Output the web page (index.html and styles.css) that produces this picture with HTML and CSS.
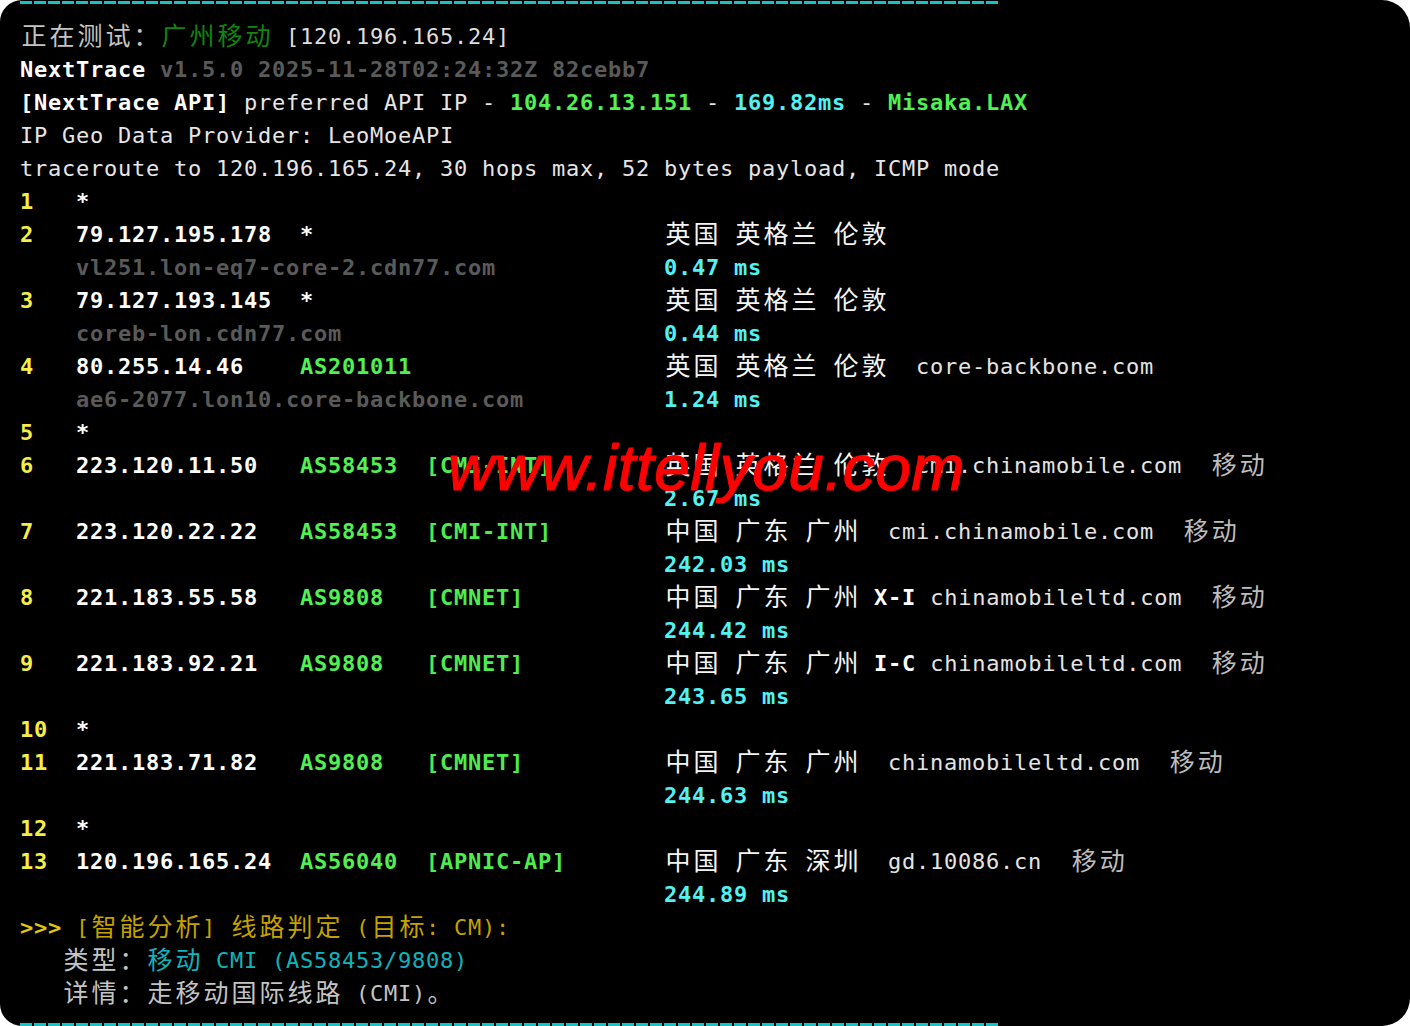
FILE: index.html
```html
<!DOCTYPE html>
<html lang="zh-CN">
<head>
<meta charset="utf-8">
<title>NextTrace</title>
<link rel="stylesheet" href="styles.css">
</head>
<body>
<div class="term">
  <div class="rule"></div>
  <div class="out">
    <div class="ln"><span class="c lg">正在测试：</span><span class="c dg">广州移动</span> <span class="lw">[120.196.165.24]</span></div>
    <div class="ln"><span class="b wh">NextTrace</span><span class="b gy"> v1.5.0 2025-11-28T02:24:32Z 82cebb7</span></div>
    <div class="ln"><span class="b wh">[NextTrace API]</span> preferred API IP - <span class="b gr">104.26.13.151</span> - <span class="b cy">169.82ms</span> - <span class="b gr">Misaka.LAX</span></div>
    <div class="ln">IP Geo Data Provider: LeoMoeAPI</div>
    <div class="ln">traceroute to 120.196.165.24, 30 hops max, 52 bytes payload, ICMP mode</div>

    <div class="hop"><span class="n">1</span><span class="ip">*</span></div>
    <div class="hop"><span class="n">2</span><span class="ip">79.127.195.178</span><span class="ip">*</span><span class="geo"><span class="c">英国</span> <span class="c">英格兰</span> <span class="c">伦敦</span></span></div>
    <div class="hop"><span class="host">vl251.lon-eq7-core-2.cdn77.com</span><span class="lat">0.47 ms</span></div>
    <div class="hop"><span class="n">3</span><span class="ip">79.127.193.145</span><span class="ip">*</span><span class="geo"><span class="c">英国</span> <span class="c">英格兰</span> <span class="c">伦敦</span></span></div>
    <div class="hop"><span class="host">coreb-lon.cdn77.com</span><span class="lat">0.44 ms</span></div>
    <div class="hop"><span class="n">4</span><span class="ip">80.255.14.46</span><span class="as">AS201011</span><span class="geo"><span class="c">英国</span> <span class="c">英格兰</span> <span class="c">伦敦</span>  <span class="dom">core-backbone.com</span></span></div>
    <div class="hop"><span class="host">ae6-2077.lon10.core-backbone.com</span><span class="lat">1.24 ms</span></div>
    <div class="hop"><span class="n">5</span><span class="ip">*</span></div>
    <div class="hop"><span class="n">6</span><span class="ip">223.120.11.50</span><span class="as">AS58453</span><span class="net">[CMI-INT]</span><span class="geo"><span class="c">英国</span> <span class="c">英格兰</span> <span class="c">伦敦</span>  <span class="dom">cmi.chinamobile.com</span>  <span class="c mv">移动</span></span></div>
    <div class="hop"><span class="lat">2.67 ms</span></div>
    <div class="hop"><span class="n">7</span><span class="ip">223.120.22.22</span><span class="as">AS58453</span><span class="net">[CMI-INT]</span><span class="geo"><span class="c">中国</span> <span class="c">广东</span> <span class="c">广州</span>  <span class="dom">cmi.chinamobile.com</span>  <span class="c mv">移动</span></span></div>
    <div class="hop"><span class="lat">242.03 ms</span></div>
    <div class="hop"><span class="n">8</span><span class="ip">221.183.55.58</span><span class="as">AS9808</span><span class="net">[CMNET]</span><span class="geo"><span class="c">中国</span> <span class="c">广东</span> <span class="c">广州</span> <span class="b wh">X-I</span> <span class="dom">chinamobileltd.com</span>  <span class="c mv">移动</span></span></div>
    <div class="hop"><span class="lat">244.42 ms</span></div>
    <div class="hop"><span class="n">9</span><span class="ip">221.183.92.21</span><span class="as">AS9808</span><span class="net">[CMNET]</span><span class="geo"><span class="c">中国</span> <span class="c">广东</span> <span class="c">广州</span> <span class="b wh">I-C</span> <span class="dom">chinamobileltd.com</span>  <span class="c mv">移动</span></span></div>
    <div class="hop"><span class="lat">243.65 ms</span></div>
    <div class="hop"><span class="n">10</span><span class="ip">*</span></div>
    <div class="hop"><span class="n">11</span><span class="ip">221.183.71.82</span><span class="as">AS9808</span><span class="net">[CMNET]</span><span class="geo"><span class="c">中国</span> <span class="c">广东</span> <span class="c">广州</span>  <span class="dom">chinamobileltd.com</span>  <span class="c mv">移动</span></span></div>
    <div class="hop"><span class="lat">244.63 ms</span></div>
    <div class="hop"><span class="n">12</span><span class="ip">*</span></div>
    <div class="hop"><span class="n">13</span><span class="ip">120.196.165.24</span><span class="as">AS56040</span><span class="net">[APNIC-AP]</span><span class="geo"><span class="c">中国</span> <span class="c">广东</span> <span class="c">深圳</span>  <span class="dom">gd.10086.cn</span>  <span class="c mv">移动</span></span></div>
    <div class="hop"><span class="lat">244.89 ms</span></div>

    <div class="ln"><span class="b au2">&gt;&gt;&gt;</span><span class="au"> [<span class="c">智能分析</span>] <span class="c">线路判定</span> (<span class="c">目标</span>: CM):</span></div>
    <div class="ln">   <span class="c lg">类型：</span><span class="tc"><span class="c">移动</span> CMI (AS58453/9808)</span></div>
    <div class="ln lg">   <span class="c">详情：走移动国际线路</span> (CMI)<span class="c">。</span></div>
  </div>
  <div class="rule rule-b"></div>
  <div class="wm">www.ittellyou.com</div>
</div>
</body>
</html>
```

FILE: styles.css
```css
html, body {
  margin: 0;
  padding: 0;
  background: #ffffff;
}

.term {
  position: relative;
  box-sizing: border-box;
  height: 1026px;
  padding: 1px 0 0 20px;
  background: #000000;
  border-radius: 22px 28px 28px 22px;
  font-family: "DejaVu Sans Mono", "Noto Sans CJK SC", monospace;
  font-size: 22px;
  letter-spacing: 0.755px;
  line-height: 33px;
  color: #e6e6e6;
}

.rule {
  width: 980px;
  height: 3px;
  background: repeating-linear-gradient(90deg, #12c4c4 0 12px, transparent 12px 14px);
}

.rule-b {
  margin-top: 13px;
}

.out {
  margin-top: 16px;
}

.ln {
  height: 33px;
  white-space: pre;
}

.hop {
  display: grid;
  grid-template-columns: 56px 224px 126px 238px 1fr;
  height: 33px;
  white-space: pre;
}

.n {
  grid-column: 1;
  font-weight: bold;
  color: #f6ee48;
}

.ip {
  font-weight: bold;
  color: #ffffff;
}

.as {
  grid-column: 3;
  font-weight: bold;
  color: #52f052;
}

.net {
  grid-column: 4;
  font-weight: bold;
  color: #4eec4e;
}

.geo {
  grid-column: 5;
  color: #f4f4f4;
}

.host {
  grid-column: 2 / 5;
  font-weight: bold;
  color: #5a5a5a;
}

.lat {
  grid-column: 5;
  font-weight: bold;
  color: #52f2f2;
}

.dom {
  color: #e4e4e4;
}

.c {
  font-family: "Noto Sans CJK SC", sans-serif;
  font-size: 25px;
  font-weight: normal;
  letter-spacing: 3px;
  line-height: 26px;
  vertical-align: -1px;
  padding-left: 1.5px;
  margin-right: -1.5px;
}

.b { font-weight: bold; }
.wh { color: #ffffff; }
.lw { color: #dedede; }
.lg { color: #c4c4c4; }
.dg { color: #118511; }
.gy { color: #5a5a5a; }
.gr { color: #52f052; }
.cy { color: #52f2f2; }
.mv { color: #bdbdbd; }
.au { color: #c4a200; }
.au2 { color: #e2c60c; }
.tc { color: #10b4bc; }

.wm {
  position: absolute;
  left: 448px;
  top: 436px;
  font-family: "Liberation Sans", Arial, sans-serif;
  font-style: italic;
  font-size: 64px;
  line-height: 1;
  letter-spacing: 0.5px;
  color: #ff0000;
  -webkit-text-stroke: 1.2px #ff0000;
  white-space: nowrap;
}
```
